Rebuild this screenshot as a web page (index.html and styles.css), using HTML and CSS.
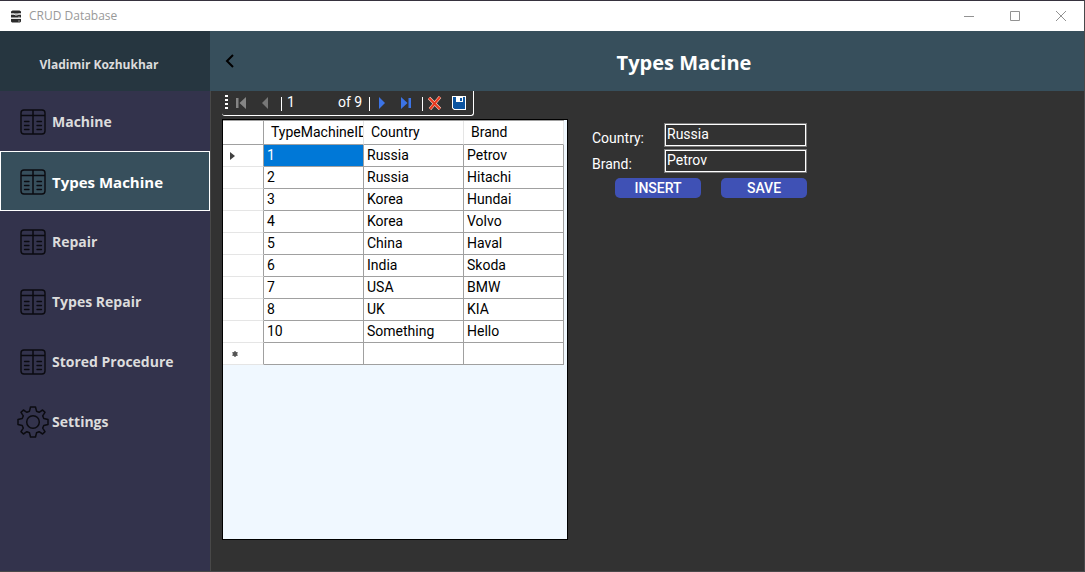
FILE: index.html
```html
<!DOCTYPE html>
<html lang="en">
<head>
<meta charset="utf-8">
<title>CRUD Database</title>
<link rel="stylesheet" href="styles.css">
</head>
<body>
<svg class="defs" aria-hidden="true">
  <symbol id="table" viewBox="0 0 26 26">
    <rect x="1" y="1" width="24" height="24" rx="3" fill="none" stroke="currentColor" stroke-width="1.4"/>
    <path d="M1 6.5H25M13 1V25" fill="none" stroke="currentColor" stroke-width="1.5"/>
    <path d="M4.500 12.500H9M4.500 16.500H9M4.500 20.500H9M17 12.500H21.500M17 16.500H21.500M17 20.500H21.500" fill="none" stroke="currentColor" stroke-width="1.300" stroke-linecap="round"/>
  </symbol>
</svg>
<div class="window">
  <header class="titlebar">
    <svg class="app-icon" viewBox="0 0 11 13" aria-hidden="true">
      <path d="M2 0.500H9L10.500 1.500V3.500H0.500V1.500ZM0.500 4.500H10.500V7.500H0.500ZM0.500 8.500H10.500V11.500L9.500 12.500H1.500L0.500 11.500Z" fill="#2b2b2b"/>
      <path d="M0 4H3.500L4.500 5H7L8 4H11M0 8.500H11" fill="none" stroke="#fff" stroke-width=".8"/>
      <path d="M8 7h1M8 11h1" stroke="#fff"/>
    </svg>
    <span class="app-name">CRUD Database</span>
    <button class="win-btn" aria-label="Minimize"><svg viewBox="0 0 10 10"><path d="M0 5.500H10"/></svg></button>
    <button class="win-btn" aria-label="Maximize"><svg viewBox="0 0 10 10"><path d="M.5 .5H9.500V9.500H.5Z"/></svg></button>
    <button class="win-btn" aria-label="Close"><svg viewBox="0 0 10 10"><path d="M0 0L10 10M10 0L0 10"/></svg></button>
  </header>
  <div class="body">
    <aside class="sidebar">
      <div class="user">Vladimir Kozhukhar</div>
      <nav class="menu">
        <button class="item"><svg class="icon"><use href="#table"/></svg>Machine</button>
        <button class="item active"><svg class="icon"><use href="#table"/></svg>Types Machine</button>
        <button class="item"><svg class="icon"><use href="#table"/></svg>Repair</button>
        <button class="item"><svg class="icon"><use href="#table"/></svg>Types Repair</button>
        <button class="item"><svg class="icon"><use href="#table"/></svg>Stored Procedure</button>
        <button class="item"><svg class="icon gear" viewBox="0 0 32 32"><g fill="none" stroke="currentColor" stroke-width="1.500" stroke-linejoin="round"><path d="M13.500 1H18.500L19.500 5.200L22.100 6.300L25.600 4L28 6.400L25.700 9.900L26.800 12.500L31 13.500V18.500L26.800 19.500L25.700 22.100L28 25.600L25.600 28L22.100 25.700L19.500 26.800L18.500 31H13.500L12.500 26.800L9.900 25.700L6.400 28L4 25.600L6.300 22.100L5.200 19.500L1 18.500V13.500L5.200 12.500L6.300 9.900L4 6.400L6.400 4L9.900 6.300L12.500 5.200Z"/><circle cx="16" cy="16" r="6.300"/></g></svg>Settings</button>
      </nav>
    </aside>
    <main class="main">
      <div class="page-head">
        <button class="back" aria-label="Back"><svg viewBox="0 0 9 14"><path d="M8 1L2 7L8 13" fill="none" stroke="#000" stroke-width="2"/></svg></button>
        <h1 class="title">Types Macine</h1>
      </div>
      <div class="content">
        <section class="data">
          <div class="navigator">
            <span class="grip"></span>
            <button class="tool" aria-label="Move first"><svg viewBox="0 0 12 12"><path d="M1 1H3.500V11H1ZM11 0V12L4.500 6Z" fill="#858585"/></svg></button>
            <button class="tool" aria-label="Move previous"><svg viewBox="0 0 12 12"><path d="M9 0V12L3 6Z" fill="#777"/></svg></button>
            <span class="sep"></span>
            <input class="position" aria-label="Position" value="1">
            <span class="count">of 9</span>
            <span class="sep"></span>
            <button class="tool" aria-label="Move next"><svg viewBox="0 0 12 12"><path d="M3 0V12L9 6Z" fill="#3c74e6"/></svg></button>
            <button class="tool" aria-label="Move last"><svg viewBox="0 0 12 12"><path d="M1 0V12L7.500 6ZM8.500 1H11V11H8.500Z" fill="#3c74e6"/></svg></button>
            <span class="sep"></span>
            <button class="tool delete" aria-label="Delete"><svg viewBox="0 0 14 14"><path d="M1 2L12 13M12 1L2 13" fill="none" stroke="#ffd2c4" stroke-width="3.200"/><path d="M1 2L12 13M12 1L2 13" fill="none" stroke="#e8391f" stroke-width="2"/></svg></button>
            <button class="tool save" aria-label="Save data"><svg viewBox="0 0 14 14"><path d="M0 0H14V14H2L0 12Z" fill="#fff"/><path d="M1 1H13V13H2.500L1 11.500Z" fill="#0c54a0"/><path d="M4 1H11V6H4Z" fill="#fff"/><path d="M8 2H10V5H8Z" fill="#0c54a0"/></svg></button>
          </div>
          <div class="grid">
            <table class="table">
              <thead><tr><th class="mark"></th><th>TypeMachineID</th><th>Country</th><th>Brand</th></tr></thead>
              <tbody>
                <tr><td class="mark"><svg class="arrow" viewBox="0 0 5 8"><path d="M0 0L5 4L0 8Z"/></svg></td><td class="selected">1</td><td>Russia</td><td>Petrov</td></tr>
                <tr><td class="mark"></td><td>2</td><td>Russia</td><td>Hitachi</td></tr>
                <tr><td class="mark"></td><td>3</td><td>Korea</td><td>Hundai</td></tr>
                <tr><td class="mark"></td><td>4</td><td>Korea</td><td>Volvo</td></tr>
                <tr><td class="mark"></td><td>5</td><td>China</td><td>Haval</td></tr>
                <tr><td class="mark"></td><td>6</td><td>India</td><td>Skoda</td></tr>
                <tr><td class="mark"></td><td>7</td><td>USA</td><td>BMW</td></tr>
                <tr><td class="mark"></td><td>8</td><td>UK</td><td>KIA</td></tr>
                <tr><td class="mark"></td><td>10</td><td>Something</td><td>Hello</td></tr>
                <tr><td class="mark"><svg class="star" viewBox="0 0 6 6"><circle cx="3" cy="3" r="2"/><path d="M3 0V6M.4 1.500L5.600 4.500M5.600 1.500L.4 4.500"/></svg></td><td></td><td></td><td></td></tr>
              </tbody>
            </table>
          </div>
        </section>
        <form class="form">
          <label for="country">Country:</label><input id="country" value="Russia">
          <label for="brand">Brand:</label><input id="brand" value="Petrov">
          <div class="actions">
            <button type="button">INSERT</button>
            <button type="button">SAVE</button>
          </div>
        </form>
      </div>
    </main>
  </div>
</div>
</body>
</html>
```

FILE: styles.css
```css
* { box-sizing: border-box; }
body { margin: 0; font: 14px/20px Roboto, sans-serif; color: #fff; }
button { border: 0; padding: 0; background: none; color: inherit; font: inherit; }
svg { display: block; }
.defs { position: absolute; width: 0; height: 0; }
.window {
  display: flex; flex-direction: column; min-height: 100vh;
  border: 1px solid #48484a; border-top-color: #36323e; border-left: 0; background: #323232;
}
.titlebar { display: flex; align-items: center; height: 30px; padding-left: 10px; background: #fff; }
.app-icon { width: 12px; height: 13px; }
.app-name { flex: 1; margin-left: 7px; color: #999; font: 12px/20px "Open Sans", sans-serif; }
.win-btn { width: 46px; height: 30px; display: grid; place-items: center; }
.win-btn svg { width: 10px; height: 10px; fill: none; stroke: #929292; }
.body { flex: 1; display: flex; }

.sidebar { width: 211px; flex: none; background: #33334c; border-right: 1px solid #484848; font-family: "Open Sans", sans-serif; font-weight: 700; }
.user { height: 60px; padding: 24px 12px 0 0; text-align: center; background: #263640; color: #dcdcdc; font-size: 12px; line-height: 20px; }
.menu { display: flex; flex-direction: column; }
.item { display: flex; align-items: center; height: 60px; padding: 2px 0 0 20px; gap: 6px; color: #dcdcdc; font-size: 14px; text-align: left; }
.icon { width: 26px; height: 26px; flex: none; color: #0b0b10; }
.icon.gear { width: 32px; height: 32px; margin: 0 -3px; }
.item.active { border: 1px solid #fff; padding-left: 19px; background: #374f5c; color: #fff; font-size: 15px; }

.main { flex: 1; min-width: 0; display: flex; flex-direction: column; }
.page-head { display: flex; align-items: center; height: 60px; margin-left: -1px; background: #374f5c; }
.back { width: 74px; height: 60px; padding-left: 15px; }
.back svg { width: 9px; height: 14px; }
.title { flex: 1; margin: 0; padding-top: 4px; text-align: center; font: 700 20px/28px "Open Sans", sans-serif; }
.content { flex: 1; display: flex; align-items: stretch; gap: 24px; padding: 0 12px 31px 11px; }
.data { display: flex; flex-direction: column; width: 346px; }

.navigator {
  display: flex; align-items: center; width: 252px; height: 25px; margin-bottom: 3px; padding-left: 3px;
  border: 1px solid #fff; border-width: 0 1px 1px 0; border-radius: 0 0 3px 3px;
}
.grip { width: 3px; height: 16px; margin-right: 1px; background: repeating-linear-gradient(#fff 0 2px, transparent 2px 4px); }
.tool { width: 24px; height: 24px; display: grid; place-items: center; }
.tool svg { width: 12px; height: 12px; }
.tool.delete svg, .tool.save svg { width: 14px; height: 14px; }
.sep { width: 1px; height: 14px; margin: 2px 0 0 4px; background: #fff; }
.position { width: 56px; height: 20px; padding: 0 5px 2px; border: 0; background: none; color: #fff; font: inherit; }
.count { width: 27px; padding-bottom: 2px; white-space: nowrap; }

.grid { flex: 1; border: 1px solid #000; background: #f0f8ff; }
.table { width: 341px; table-layout: fixed; border-collapse: separate; border-spacing: 0; border-top: 1px solid #a0a0a0; color: #000; background: #fff; }
.table th, .table td { height: 22px; padding: 0 3px 1px; border: 1px solid #a0a0a0; border-width: 0 1px 1px 0; font-weight: 400; line-height: 18px; text-align: left; white-space: nowrap; overflow: hidden; }
.table th { height: 24px; padding: 0 0 2px 7px; border-right-color: #e5e5e5; }
.table .mark { width: 41px; padding: 1px 0 0 7px; border-right-color: #a0a0a0; }
.table td.mark { border-bottom-color: #e5e5e5; }
.table td.selected { background: #0078d7; color: #fff; }
.arrow { width: 5px; height: 8px; fill: #404040; }
.star { width: 6px; height: 6px; margin-left: 2px; fill: #555; stroke: #555; }

.form { display: grid; grid-template-columns: 72px 143px; grid-auto-rows: 24px; row-gap: 2px; align-content: start; padding-top: 32px; }
.form label { padding-top: 5px; }
.form input { height: 24px; padding: 0 2px 3px; border: 1px solid #7a7a7a; outline: 1px solid #fff; outline-offset: -2px; background: #323232; color: #fff; font: inherit; }
.actions { grid-column: 1 / -1; display: flex; justify-content: flex-end; gap: 20px; padding-top: 3px; }
.actions button { width: 86px; height: 20px; border-radius: 5px; background: #3f51b5; font-weight: 500; }
```
